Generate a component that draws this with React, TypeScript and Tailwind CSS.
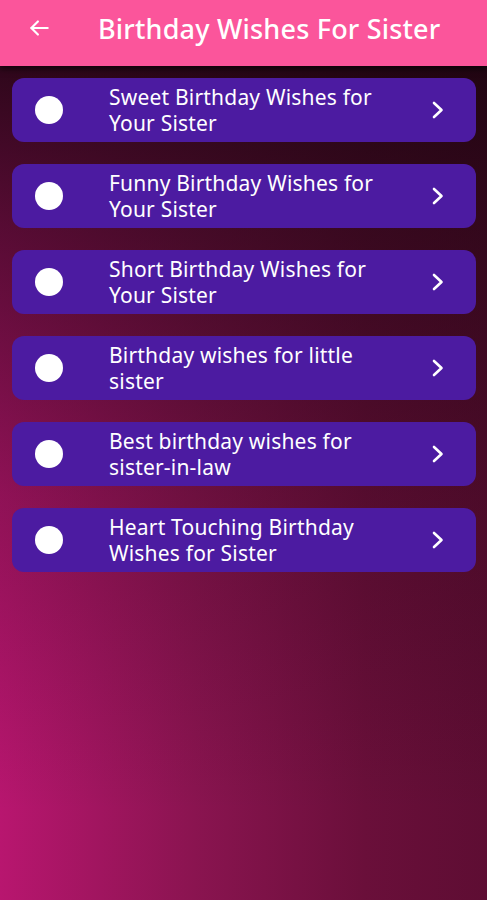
import React from "react";

const items = [
  ["Sweet Birthday Wishes for", "Your Sister"],
  ["Funny Birthday Wishes for", "Your Sister"],
  ["Short Birthday Wishes for", "Your Sister"],
  ["Birthday wishes for little", "sister"],
  ["Best birthday wishes for", "sister-in-law"],
  ["Heart Touching Birthday", "Wishes for Sister"],
];

export default function App() {
  return (
    <div
      className="w-[487px] h-[900px] flex flex-col overflow-hidden bg-[linear-gradient(to_bottom,rgba(22,4,12,0.95)_0%,rgba(22,4,12,0.6)_25%,rgba(22,4,12,0.25)_55%,rgba(22,4,12,0)_90%),linear-gradient(to_right,#b8166f_0%,#8a1450_40%,#6a0f3a_75%,#5e0d33_100%)]"
      style={{ fontFamily: '"Noto Sans", "Open Sans", sans-serif' }}
    >
      <header className="h-[66px] shrink-0 bg-[#fb559b] flex items-center pb-[10px] shadow-[0_3px_6px_rgba(0,0,0,0.6)] relative z-10">
        <div className="w-[98px] flex items-center pl-[26px]">
          <svg width="26" height="26" viewBox="0 0 24 24" fill="none" stroke="white" strokeWidth="2" strokeLinecap="round" strokeLinejoin="round">
            <path d="M20 12H5" />
            <path d="M11 6l-6 6 6 6" />
          </svg>
        </div>
        <h1 className="text-white text-[27px] font-medium leading-none tracking-[0.2px]">
          Birthday Wishes For Sister
        </h1>
      </header>
      <div className="flex flex-col gap-[22px] px-[12px] pt-[12px] pr-[11px]">
        {items.map((t, i) => (
          <div
            key={i}
            className="h-[64px] rounded-[12px] bg-[#4c1ba1] flex items-center"
          >
            <div className="w-[97px] flex items-center pl-[23px]">
              <div className="w-[28px] h-[28px] rounded-full bg-white" />
            </div>
            <div className="flex-1 text-white text-[21px] leading-[26px] tracking-[0.2px]">
              <div>{t[0]}</div>
              <div>{t[1]}</div>
            </div>
            <div className="w-[60px] flex items-center pl-[13px]">
              <svg width="18" height="22" viewBox="0 0 18 22" fill="none" stroke="white" strokeWidth="2.6" strokeLinecap="round" strokeLinejoin="round">
                <path d="M5 4l7.5 7-7.5 7" />
              </svg>
            </div>
          </div>
        ))}
      </div>
    </div>
  );
}
